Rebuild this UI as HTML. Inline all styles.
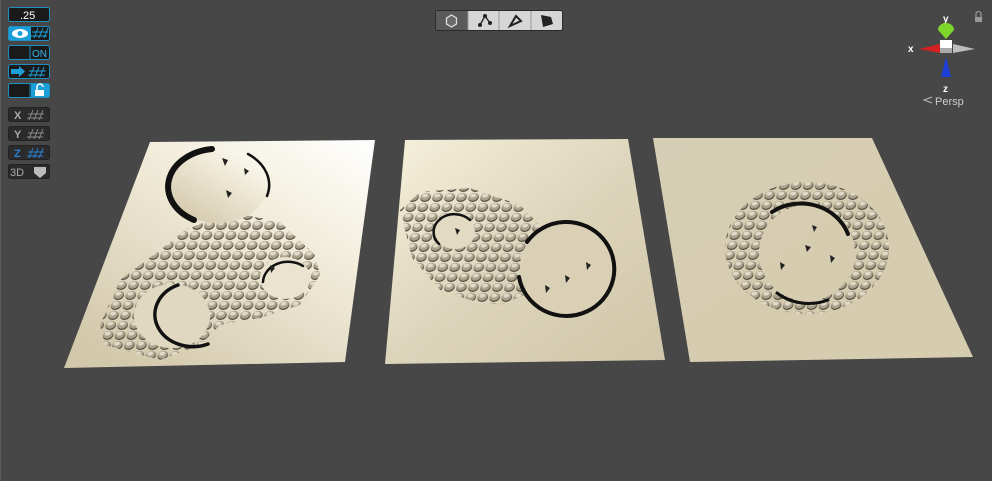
<!DOCTYPE html>
<html><head><meta charset="utf-8"><style>
html,body{margin:0;padding:0;background:#474747;width:992px;height:481px;overflow:hidden;font-family:"Liberation Sans",sans-serif}
svg{position:absolute;left:0;top:0}
</style></head><body>
<svg width="992" height="481" viewBox="0 0 992 481">
<defs>
<linearGradient id="g1" x1="1" y1="0" x2="0.2" y2="1">
<stop offset="0" stop-color="#ffffff"/><stop offset="0.35" stop-color="#f3eedd"/><stop offset="1" stop-color="#d2c8ab"/></linearGradient>
<linearGradient id="g2" x1="0" y1="0" x2="1" y2="1">
<stop offset="0" stop-color="#f6f1dc"/><stop offset="0.5" stop-color="#ddd5bb"/><stop offset="1" stop-color="#d0c6a9"/></linearGradient>
<linearGradient id="g3" x1="0" y1="0" x2="1" y2="1">
<stop offset="0" stop-color="#d6ceb4"/><stop offset="1" stop-color="#d6ccae"/></linearGradient>
<pattern id="dots" width="12" height="10" patternUnits="userSpaceOnUse" patternTransform="skewX(-15)">
<ellipse cx="6" cy="5.6" rx="5.2" ry="4.4" fill="#4e483c"/><ellipse cx="5.6" cy="4.8" rx="4.8" ry="4" fill="#a9a18c"/><ellipse cx="5" cy="3.6" rx="3" ry="2" fill="#e0d9c5"/>
</pattern>
<pattern id="dots2" width="12" height="10" patternUnits="userSpaceOnUse" patternTransform="translate(4,2) skewX(-15)">
<ellipse cx="6" cy="5.6" rx="5.2" ry="4.4" fill="#4e483c"/><ellipse cx="5.6" cy="4.8" rx="4.8" ry="4" fill="#a9a18c"/><ellipse cx="5" cy="3.6" rx="3" ry="2" fill="#e0d9c5"/>
</pattern>
</defs>
<rect width="992" height="481" fill="#474747"/>
<rect x="0" y="0" width="1" height="481" fill="#5a5a5a"/>
<polygon points="150,142 375,140 345,362 64,368" fill="url(#g1)"/>
<polygon points="405,140 628,139 665,360 385,364" fill="url(#g2)"/>
<polygon points="653,138 872,138 973,357 690,362" fill="url(#g3)"/>
<!-- plane1 -->
<path d="M100,325 L120,280 L160,250 L185,230 L230,212 L280,222 L315,255 L320,275 L300,305 L260,318 L220,325 L200,345 L160,360 L105,345 Z" fill="url(#dots)"/>
<ellipse cx="218" cy="185" rx="50" ry="38" fill="url(#g1)"/>
<g fill="none" stroke="#111" stroke-linecap="round">
<path d="M212,149 A50,38 0 0 0 194,220" stroke-width="6"/>
<path d="M248,154 A50,38 0 0 1 267,196" stroke-width="2.5"/>
</g>
<ellipse cx="172" cy="316" rx="38" ry="32" fill="#e0d8c1"/>
<ellipse cx="285" cy="278" rx="25" ry="21" fill="#e9e3d0"/>
<g fill="none" stroke="#111" stroke-linecap="round">
<path d="M178,285 A38,32 0 1 0 208,344" stroke-width="3.5"/>
<path d="M263,282 A25,21 0 0 1 303,266" stroke-width="2.5"/>
</g>
<!-- plane2 -->
<path d="M400,210 L420,192 L470,188 L520,205 L540,225 L520,255 L525,295 L500,305 L470,300 L440,290 L412,258 Z" fill="url(#dots2)"/>
<ellipse cx="455" cy="232" rx="20" ry="17" fill="#e2dac2"/>
<ellipse cx="568" cy="270" rx="48" ry="47" fill="#d9d0b6"/>
<g fill="none" stroke="#111" stroke-linecap="round">
<path d="M439,244 A20,17 0 0 1 470,220" stroke-width="2.5"/>
<path d="M527,242 A48,47 0 1 1 519,277" stroke-width="4"/>
</g>
<!-- plane3 -->
<path fill-rule="evenodd" fill="url(#dots)" d="M725,248 A82,66 0 1 0 889,248 A82,66 0 1 0 725,248 Z M759,253 A48,48 0 1 0 855,253 A48,48 0 1 0 759,253 Z"/>
<g fill="none" stroke="#111" stroke-linecap="round">
<path d="M772,212 A50,46 0 0 1 848,234" stroke-width="4"/>
<path d="M777,293 A50,46 0 0 0 828,300" stroke-width="3"/>
</g>
<g fill="#222">
<path d="M222,158l6,2-3,6z"/><path d="M244,168l5,3-4,4z"/><path d="M226,190l6,3-4,5z"/><path d="M270,265l5,3-4,5z"/>
<path d="M455,228l5,2-3,5z"/><path d="M565,275l5,3-4,5z"/><path d="M586,262l5,3-4,5z"/><path d="M545,285l5,3-4,5z"/>
<path d="M805,245l6,2-4,5z"/><path d="M830,255l5,3-4,5z"/><path d="M780,262l5,3-4,5z"/><path d="M812,225l5,2-3,5z"/>
</g>
<!-- left toolbar -->
<g font-size="11" fill="#fff">
<rect x="8.5" y="7.5" width="41" height="14" rx="2" fill="#1a1a1a" stroke="#1f8fc0"/>
<text x="20" y="19">.25</text>
<rect x="8.5" y="26.5" width="41" height="14" rx="2" fill="#1a1a1a" stroke="#1f8fc0"/>
<rect x="9" y="27" width="22" height="13" fill="#1c9fd8"/>
<ellipse cx="20" cy="33.5" rx="8" ry="4.5" fill="#fff"/><circle cx="20" cy="33.5" r="2.5" fill="#1c9fd8"/>
<path d="M34,38 l4,-10 M39,38 l4,-10 M44,38 l4,-10 M32,32 h16 M31,36 h16" stroke="#1c9fd8" stroke-width="1"/>
<rect x="8.5" y="45.5" width="41" height="14" rx="2" fill="#1a1a1a" stroke="#1f8fc0"/>
<line x1="30" y1="46" x2="30" y2="59" stroke="#1f8fc0"/>
<text x="32" y="57" fill="#3bb5ea" font-size="10">ON</text>
<rect x="8.5" y="64.5" width="41" height="14" rx="2" fill="#1a1a1a" stroke="#1f8fc0"/>
<path d="M11,69h8v-3l6,5.5-6,5.5v-3h-8z" fill="#1c9fd8"/>
<path d="M30,77 l4,-10 M35,77 l4,-10 M40,77 l4,-10 M29,71 h17 M28,75 h17" stroke="#1c9fd8"/>
<rect x="8.5" y="83.5" width="41" height="14" rx="2" fill="#1a1a1a" stroke="#1f8fc0"/>
<line x1="30" y1="84" x2="30" y2="97" stroke="#1f8fc0"/>
<rect x="31" y="84" width="18" height="13" fill="#1c9fd8"/>
<rect x="35" y="90" width="9" height="6" fill="#fff"/><path d="M37,90v-3a3,3 0 0 1 6,0" fill="none" stroke="#fff" stroke-width="1.5"/>
<g fill="#2b2b2b" stroke="#222">
<rect x="8.5" y="107.5" width="41" height="14" rx="2"/><rect x="8.5" y="126.5" width="41" height="14" rx="2"/>
<rect x="8.5" y="145.5" width="41" height="14" rx="2"/><rect x="8.5" y="164.5" width="41" height="14" rx="2"/>
</g>
<text x="14" y="119" fill="#aaa" font-weight="bold">X</text><text x="14" y="138" fill="#aaa" font-weight="bold">Y</text>
<text x="14" y="157" fill="#2a7fd0" font-weight="bold">Z</text><text x="10" y="176" fill="#aaa" font-size="11">3D</text>
<g stroke="#888"><path d="M29,120l4,-10M34,120l4,-10M39,120l4,-10M28,114h16M27,118h16"/><path d="M29,139l4,-10M34,139l4,-10M39,139l4,-10M28,133h16M27,137h16"/></g>
<path d="M29,158l4,-10M34,158l4,-10M39,158l4,-10M28,152h16M27,156h16" stroke="#2a7fd0"/>
<path d="M34,167h12v6l-6,5-6,-5z" fill="#bbb"/>
</g>
<!-- top toolbar -->
<rect x="435.5" y="10.5" width="127" height="20" rx="2" fill="#d6d6d6" stroke="#2a2a2a"/>
<rect x="436" y="11" width="32" height="19" fill="#5a5a5a"/>
<line x1="468" y1="11" x2="468" y2="30" stroke="#999"/><line x1="499" y1="11" x2="499" y2="30" stroke="#999"/><line x1="531" y1="11" x2="531" y2="30" stroke="#999"/>
<path d="M451.5,15l5,3v6l-5,3-5,-3v-6z" fill="#6a6a6a" stroke="#ddd" stroke-width="1.3"/>
<path d="M480,25l5,-9 5,7" fill="none" stroke="#222" stroke-width="1.3"/><circle cx="480" cy="25" r="2" fill="#222"/><circle cx="485" cy="16" r="2" fill="#222"/><circle cx="490" cy="23" r="2" fill="#222"/>
<path d="M510,26l6,-10 5,5z" fill="none" stroke="#222" stroke-width="2"/>
<path d="M541,15l10,2 2,7-10,3z" fill="#222"/>
<!-- gizmo -->
<path d="M976,17v-3a2.5,2.5 0 0 1 5,0v3" fill="none" stroke="#999" stroke-width="1.2"/><rect x="975" y="17" width="7" height="5" fill="#999"/>
<text x="943" y="22" fill="#fff" font-size="10" font-weight="bold">y</text>
<path d="M938,30 a8,7 0 1 1 16,0 l-8,9z" fill="#7ed62a"/>
<rect x="940" y="40" width="12" height="11" fill="#fff"/><rect x="940" y="48" width="12" height="5" fill="#aaa"/>
<path d="M919,49l21,-5v9z" fill="#d42020"/>
<text x="908" y="52" fill="#fff" font-size="10" font-weight="bold">x</text>
<path d="M975,49l-22,-5v9z" fill="#bdbdbd"/>
<path d="M941,77l5,-20 5,20z" fill="#1d3fd8"/>
<text x="943" y="92" fill="#fff" font-size="10" font-weight="bold">z</text>
<path d="M932,97l-8,3 8,3" fill="none" stroke="#bbb"/>
<text x="935" y="105" fill="#ccc" font-size="11">Persp</text>
</svg>
</body></html>
